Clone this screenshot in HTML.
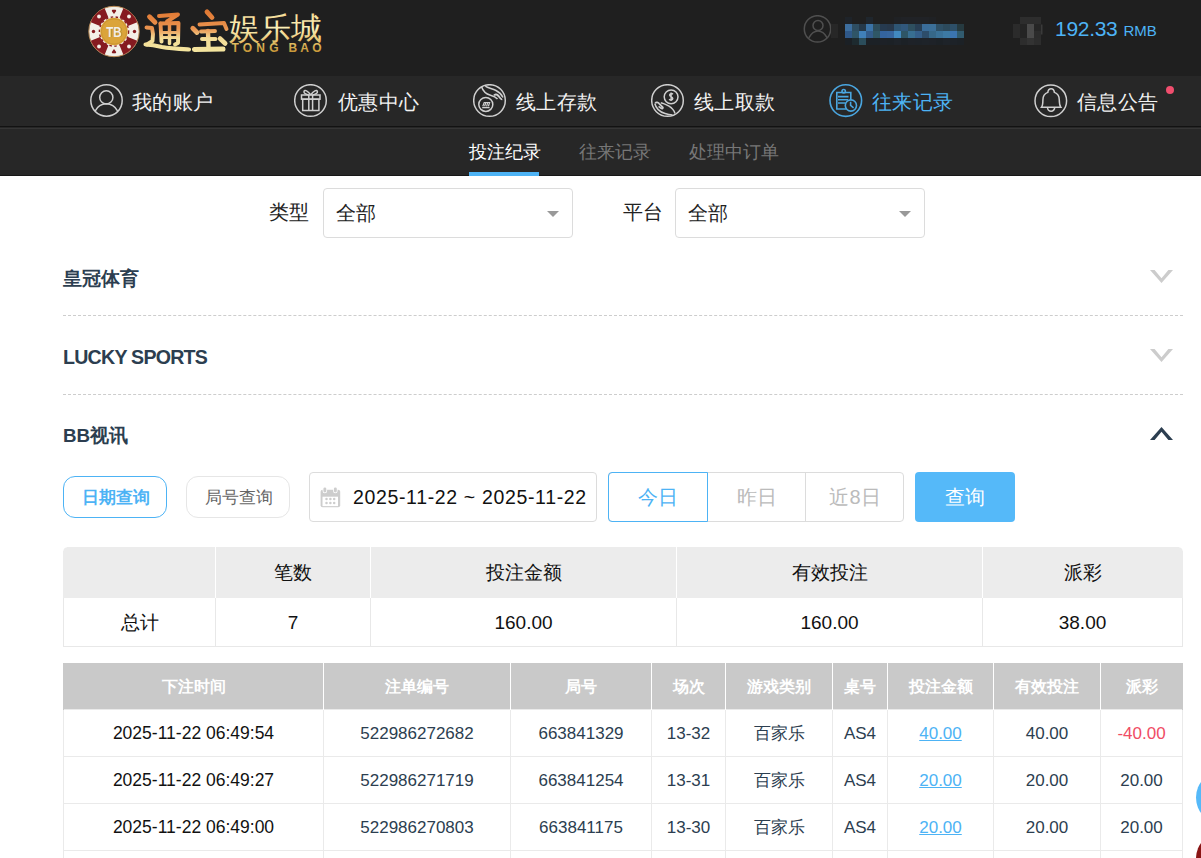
<!DOCTYPE html>
<html><head><meta charset="utf-8">
<style>
*{margin:0;padding:0;box-sizing:border-box;}
html,body{width:1201px;height:858px;overflow:hidden;background:#fff;font-family:"Liberation Sans",sans-serif;color:#2c3e50;position:relative;}
.abs{position:absolute;white-space:nowrap;}
#top{position:absolute;left:0;top:0;width:1201px;height:76px;background:#1f1f1f;}
#nav{position:absolute;left:0;top:76px;width:1201px;height:50px;background:#272727;}
#navline{position:absolute;left:0;top:126px;width:1201px;height:1px;background:#121212;}
#navline1{position:absolute;left:0;top:127px;width:1201px;height:1px;background:#262626;}
#navline2{position:absolute;left:0;top:128px;width:1201px;height:1px;background:#353535;}
#sub{position:absolute;left:0;top:129px;width:1201px;height:46px;background:#272727;}
#subline{position:absolute;left:0;top:175px;width:1201px;height:1px;background:#171717;}
.ni{position:absolute;top:84px;height:34px;}
.ni svg{position:absolute;left:0;top:0;}
.ni span{position:absolute;left:42px;top:3.5px;font-size:20px;line-height:28px;color:#f2f2f2;white-space:nowrap;letter-spacing:0.4px;}
.tab{position:absolute;top:139px;font-size:18px;line-height:26px;color:#777;white-space:nowrap;}
.lbl{position:absolute;font-size:19.5px;line-height:26px;color:#222;white-space:nowrap;}
.sel{position:absolute;top:188px;width:250px;height:50px;border:1px solid #dcdcdc;border-radius:4px;}
.sel span{position:absolute;left:12px;top:11px;font-size:19.5px;line-height:26px;color:#222;}
.sel i{position:absolute;right:13.5px;top:22px;width:0;height:0;border-left:6px solid transparent;border-right:6px solid transparent;border-top:6px solid #999;}
.acc{position:absolute;left:63px;font-size:18.8px;font-weight:bold;line-height:26px;color:#2c3e50;white-space:nowrap;}
.dash{position:absolute;left:63px;width:1120px;height:1px;border-top:1px dashed #cdcdcd;}
.chev{position:absolute;left:1150px;}
.btn{position:absolute;top:476px;height:42px;border-radius:12px;padding-left:1px;font-size:17px;line-height:41px;text-align:center;white-space:nowrap;}
.seg{position:absolute;box-sizing:border-box;top:472px;height:50px;font-size:20px;line-height:48px;text-align:center;color:#bbb;}
table{border-collapse:collapse;table-layout:fixed;}
#sum{position:absolute;left:63px;top:547px;width:1120px;}
#sum td{border:1px solid #e8e8e8;text-align:center;font-size:19px;color:#111;padding:0;}
#sum tr.h td{background:#ececec;border-top:none;border-bottom:none;border-left-color:#fff;border-right-color:#fff;height:51px;padding-top:1px;}
#sum tr.h td:first-child{border-left-color:#ececec;}
#sum tr.h td:last-child{border-right-color:#ececec;}
#sum tr.b td{height:48px;padding-top:2px;border-top:none;}
#det{position:absolute;left:63px;top:663px;width:1120px;}
#det th{height:46px;background:#c9c9c9;color:#fff;font-size:16px;font-weight:bold;border-left:1px solid #fff;border-right:1px solid #fff;padding:4px 0 0 0;}
#det th:first-child{border-left-color:#c9c9c9;}
#det th:last-child{border-right-color:#c9c9c9;}
#det td{height:47px;border:1px solid #eaeaea;text-align:center;font-size:17px;color:#2c3e50;padding:2px 0 0 0;}
#det td.t{color:#111;font-size:17.5px;}
#det td.l{color:#4db3f5;text-decoration:underline;}
#det td.r{color:#f04c64;}
</style></head><body>
<div id="top"></div>
<div id="nav"></div>
<div id="navline"></div>
<div id="navline1"></div>
<div id="navline2"></div>
<div id="sub"></div>
<div id="subline"></div>

<!-- LOGO -->
<svg class="abs" style="left:86px;top:3px;" width="240" height="58" viewBox="0 0 240 58">
<defs>
<linearGradient id="gold" x1="0" y1="0" x2="0" y2="1">
<stop offset="0" stop-color="#e0702a"/><stop offset="0.35" stop-color="#f3c77a"/><stop offset="0.6" stop-color="#fbf0b0"/><stop offset="1" stop-color="#d9a437"/>
</linearGradient>
<linearGradient id="gold2" x1="0" y1="0" x2="0" y2="1">
<stop offset="0" stop-color="#f3d890"/><stop offset="0.5" stop-color="#fbf0b8"/><stop offset="1" stop-color="#e0b050"/>
</linearGradient>
<linearGradient id="gold3" x1="0" y1="0" x2="0" y2="1">
<stop offset="0" stop-color="#e8c870"/><stop offset="1" stop-color="#c08a28"/>
</linearGradient>
</defs>
<g transform="translate(28,28.5)">
<circle r="25.2" fill="#f3efe8" stroke="#b98a55" stroke-width="1"/>
<g fill="#861a20">
<path id="seg" d="M-9.37,-23.18 A25,25 0 0 0 -23.18,-9.37 L-13.9,-5.62 A15,15 0 0 1 -5.62,-13.9 Z"/>
<use href="#seg" transform="rotate(90)"/><use href="#seg" transform="rotate(180)"/><use href="#seg" transform="rotate(270)"/>
<path d="M0,-17.5 L-2.2,-20.5 A1.3,1.3 0 0 1 0,-21.5 A1.3,1.3 0 0 1 2.2,-20.5 Z"/>
<path d="M0,17.5 L-2.2,20.5 A1.3,1.3 0 0 0 0,21.5 A1.3,1.3 0 0 0 2.2,20.5 Z"/>
<circle cx="-20.5" cy="0" r="1.7"/><circle cx="20.5" cy="0" r="1.7"/>
</g>
<g fill="#f3efe8"><circle cx="-15" cy="-15" r="1.9"/><circle cx="15" cy="-15" r="1.9"/><circle cx="-15" cy="15" r="1.9"/><circle cx="15" cy="15" r="1.9"/></g>
<circle r="14.6" fill="none" stroke="#861a20" stroke-width="1.4" stroke-dasharray="2.5 2.5"/>
<circle r="13.7" fill="#dba43a"/>
<circle r="12.6" fill="none" stroke="#c9922e" stroke-width="0.8"/>
<text x="0.8" y="5.8" text-anchor="middle" font-family="Liberation Sans" font-weight="bold" font-size="14" fill="#6a4a20" opacity="0.5" transform="scale(0.83,1)">TB</text>
<text x="0" y="5.2" text-anchor="middle" font-family="Liberation Sans" font-weight="bold" font-size="14" fill="#f3efe6" transform="scale(0.83,1)">TB</text>
</g>
<linearGradient id="goldc" gradientUnits="userSpaceOnUse" x1="0" y1="8" x2="0" y2="50">
<stop offset="0" stop-color="#e07832"/><stop offset="0.42" stop-color="#ea9450"/><stop offset="0.65" stop-color="#f3dc96"/><stop offset="1" stop-color="#f4e6a0"/>
</linearGradient>
<g fill="none" stroke="url(#goldc)" stroke-linecap="round" stroke-linejoin="round">
<path d="M63.5 13.8 L69 19.2" stroke-width="4.83"/>
<path d="M60.5 24.5 L66 25 L67 31 L66.5 38 L61 41.5" stroke-width="3.91"/>
<path d="M59.5 41.5 C64 41.8 69 42.5 76 44 C84 45.5 94 46 103 46.5" stroke-width="4.14"/>
<path d="M73 13 L92 11.5 L81 18.5" stroke-width="3.91"/>
<path d="M74.5 20.5 L75.5 38.5" stroke-width="3.91"/>
<path d="M74.5 20.5 L92.5 20 L92 40 L89 41.5" stroke-width="3.91"/>
<path d="M76 29.5 H91 M76 34.5 H91" stroke-width="2.99"/>
<path d="M83.5 20 V40.5" stroke-width="3.45"/>
<path d="M121 8.8 L126 14.5" stroke-width="4.83"/>
<path d="M106.8 25.2 L111 29.5" stroke-width="4.83"/>
<path d="M113.5 21.5 L138 20 L140.5 26" stroke-width="3.91"/>
<path d="M115 28.5 L129 28 M116 36 L129.5 36" stroke-width="3.91"/>
<path d="M122 28 L122.5 45" stroke-width="4.37"/>
<path d="M108.5 46.5 L137 46" stroke-width="5.06"/>
<path d="M134 35.5 L139.2 40.5" stroke-width="4.60"/>
</g>

<g transform="translate(142.5,36) scale(1,1)"><text x="0" y="0" font-family="Liberation Serif" font-weight="500" font-size="31" fill="url(#gold2)">娱乐城</text></g>
<text x="145.5" y="48.8" font-family="Liberation Sans" font-weight="bold" font-size="12" textLength="47" lengthAdjust="spacing" fill="url(#gold3)">TONG</text><text x="202.5" y="48.8" font-family="Liberation Sans" font-weight="bold" font-size="12" textLength="33" lengthAdjust="spacing" fill="url(#gold3)">BAO</text>
</svg>

<!-- top right -->
<svg class="abs" style="left:803px;top:15px;" width="29" height="29" viewBox="0 0 29 29" fill="none" stroke="#4f4f4f" stroke-width="1.5">
<circle cx="14.5" cy="13.9" r="13.2"/>
<circle cx="15" cy="10.5" r="5"/>
<path d="M5.8 22.8 C8.5 18 11.5 16 15 16 C18.5 16 21.5 18 24.2 22.8"/>
</svg>
<div class="abs" style="left:831px;top:24px;width:7px;height:14px;background:#272727;"></div>
<svg class="abs" style="left:845px;top:17px;" width="119" height="28" viewBox="0 0 119 28"><rect x="0" y="0" width="7" height="7" fill="#1e2329"/><rect x="7" y="0" width="7" height="7" fill="#1f1f1f"/><rect x="14" y="0" width="7" height="7" fill="#1f1f1f"/><rect x="21" y="0" width="7" height="7" fill="#1f262d"/><rect x="28" y="0" width="7" height="7" fill="#1f1f1f"/><rect x="35" y="0" width="7" height="7" fill="#1f1f1f"/><rect x="42" y="0" width="7" height="7" fill="#1f1f1f"/><rect x="49" y="0" width="7" height="7" fill="#1f2124"/><rect x="56" y="0" width="7" height="7" fill="#202226"/><rect x="63" y="0" width="7" height="7" fill="#202226"/><rect x="70" y="0" width="7" height="7" fill="#202226"/><rect x="77" y="0" width="7" height="7" fill="#202226"/><rect x="84" y="0" width="7" height="7" fill="#1f2124"/><rect x="91" y="0" width="7" height="7" fill="#1f1f1f"/><rect x="98" y="0" width="7" height="7" fill="#1f1f1f"/><rect x="105" y="0" width="7" height="7" fill="#1f1f1f"/><rect x="112" y="0" width="7" height="7" fill="#1f1f1f"/><rect x="0" y="7" width="7" height="7" fill="#3d6e9e"/><rect x="7" y="7" width="7" height="7" fill="#2e4d61"/><rect x="14" y="7" width="7" height="7" fill="#25394a"/><rect x="21" y="7" width="7" height="7" fill="#3b73a6"/><rect x="28" y="7" width="7" height="7" fill="#2d4d5c"/><rect x="35" y="7" width="7" height="7" fill="#263a4f"/><rect x="42" y="7" width="7" height="7" fill="#27384b"/><rect x="49" y="7" width="7" height="7" fill="#2e5573"/><rect x="56" y="7" width="7" height="7" fill="#31587c"/><rect x="63" y="7" width="7" height="7" fill="#2e4f5f"/><rect x="70" y="7" width="7" height="7" fill="#283f55"/><rect x="77" y="7" width="7" height="7" fill="#3a6d9a"/><rect x="84" y="7" width="7" height="7" fill="#3b6f98"/><rect x="91" y="7" width="7" height="7" fill="#2e5066"/><rect x="98" y="7" width="7" height="7" fill="#2c4a5c"/><rect x="105" y="7" width="7" height="7" fill="#2d4f68"/><rect x="112" y="7" width="7" height="7" fill="#263a40"/><rect x="0" y="14" width="7" height="7" fill="#2f5888"/><rect x="7" y="14" width="7" height="7" fill="#2f5567"/><rect x="14" y="14" width="7" height="7" fill="#4080b9"/><rect x="21" y="14" width="7" height="7" fill="#335c8b"/><rect x="28" y="14" width="7" height="7" fill="#2f5766"/><rect x="35" y="14" width="7" height="7" fill="#3464a0"/><rect x="42" y="14" width="7" height="7" fill="#3766a0"/><rect x="49" y="14" width="7" height="7" fill="#4289c0"/><rect x="56" y="14" width="7" height="7" fill="#2e5565"/><rect x="63" y="14" width="7" height="7" fill="#386e91"/><rect x="70" y="14" width="7" height="7" fill="#355f8a"/><rect x="77" y="14" width="7" height="7" fill="#2d4d6a"/><rect x="84" y="14" width="7" height="7" fill="#366889"/><rect x="91" y="14" width="7" height="7" fill="#3a7298"/><rect x="98" y="14" width="7" height="7" fill="#3d7aa3"/><rect x="105" y="14" width="7" height="7" fill="#3b74b0"/><rect x="112" y="14" width="7" height="7" fill="#315b6f"/><rect x="0" y="21" width="7" height="7" fill="#1b2025"/><rect x="7" y="21" width="7" height="7" fill="#1d2a2f"/><rect x="14" y="21" width="7" height="7" fill="#2b4d5b"/><rect x="21" y="21" width="7" height="7" fill="#1c2126"/><rect x="28" y="21" width="7" height="7" fill="#1c2126"/><rect x="35" y="21" width="7" height="7" fill="#1d2127"/><rect x="42" y="21" width="7" height="7" fill="#1c2126"/><rect x="49" y="21" width="7" height="7" fill="#1e2329"/><rect x="56" y="21" width="7" height="7" fill="#1c2126"/><rect x="63" y="21" width="7" height="7" fill="#1e2228"/><rect x="70" y="21" width="7" height="7" fill="#1d2228"/><rect x="77" y="21" width="7" height="7" fill="#1e2329"/><rect x="84" y="21" width="7" height="7" fill="#1e2228"/><rect x="91" y="21" width="7" height="7" fill="#1c2126"/><rect x="98" y="21" width="7" height="7" fill="#1e2329"/><rect x="105" y="21" width="7" height="7" fill="#1d2228"/><rect x="112" y="21" width="7" height="7" fill="#1c2126"/></svg>
<svg class="abs" style="left:1013px;top:17px;" width="31" height="28" viewBox="0 0 31 28">
<rect x="7" y="0" width="21" height="7" fill="#2d2d2d"/>
<rect x="0" y="7" width="7" height="14" fill="#2b2b2b"/>
<rect x="7" y="7" width="7" height="14" fill="#242424"/>
<rect x="14" y="7" width="7" height="14" fill="#4a4a4a"/>
<rect x="21" y="7" width="7" height="7" fill="#262626"/>
<rect x="21" y="14" width="7" height="7" fill="#2c2c2c"/>
<rect x="28" y="7.5" width="1.5" height="10" fill="#3a3a3a"/>
<rect x="7" y="21" width="7" height="7" fill="#2d2d2d"/>
<rect x="14" y="21" width="7" height="7" fill="#333"/>
<rect x="21" y="21" width="7" height="7" fill="#2d2d2d"/>
</svg>
<div class="abs" style="left:1055px;top:15px;font-size:21px;line-height:28px;color:#4db3f5;letter-spacing:-0.3px;">192.33</div>
<div class="abs" style="left:1123.5px;top:21px;font-size:15px;line-height:20px;color:#4db3f5;">RMB</div>

<!-- nav items -->
<div class="ni" style="left:90px;"><svg width="34" height="34" viewBox="0 0 34 34" fill="none" stroke="#cfcfcf" stroke-width="1.5">
<circle cx="16.5" cy="16.5" r="15.7"/>
<circle cx="16.3" cy="13.4" r="6.6"/>
<path d="M5.2 27 C8 21.5 12 19.8 16.3 19.8 C20.6 19.8 24.6 21.5 27.6 27"/>
</svg><span>我的账户</span></div>
<div class="ni" style="left:294px;"><svg width="34" height="34" viewBox="0 0 34 34" fill="none" stroke="#cfcfcf" stroke-width="1.5">
<circle cx="16.5" cy="16.5" r="15.8"/>
<rect x="7.5" y="11" width="18.5" height="4.2"/>
<rect x="8.7" y="15.2" width="16.2" height="11.3"/>
<path d="M14.8 11 V26.5 M18.6 11 V26.5"/>
<path d="M16.7 11 C14 6.5 10.5 5.5 10 7.5 C9.6 9.2 12 10.6 14.8 11 M16.7 11 C19.4 6.5 22.9 5.5 23.4 7.5 C23.8 9.2 21.4 10.6 18.6 11"/>
</svg><span style="left:44px;">优惠中心</span></div>
<div class="ni" style="left:473px;"><svg width="34" height="34" viewBox="0 0 34 34" fill="none" stroke="#cfcfcf" stroke-width="1.5">
<circle cx="16.5" cy="16.5" r="15.8"/>
<path d="M8.6 2.8 C10 7.5 13 10 17.5 11.3 C20 12 22.5 12.8 24.5 15"/>
<path d="M12.3 2.2 C15 4 19 4.6 23 6.5 C26 8 28.6 10.5 30 13.5"/>
<path d="M21 11.5 C22 9.8 24 10.2 25.5 12 C27 14 28.5 15.5 29.2 15.2" stroke-width="2"/>
<circle cx="12.8" cy="20.4" r="7"/>
<path d="M9.8 22.3 L11.2 18.5 H16.6 L15.4 22.3 M11.6 22.3 L12.8 18.8 M13.6 22.3 L14.6 18.8" stroke-width="1.2"/>
<path d="M9.2 23.6 H16.6" stroke-width="1.4"/>
</svg><span style="left:43px;">线上存款</span></div>
<div class="ni" style="left:651px;"><svg width="34" height="34" viewBox="0 0 34 34" fill="none" stroke="#cfcfcf" stroke-width="1.5">
<circle cx="16.5" cy="16.5" r="15.8"/>
<circle cx="20.1" cy="12.8" r="6.9"/>
<path d="M22 10.2 C21 9.2 18.6 9.3 18.6 11 C18.6 12.8 21.8 12.5 21.8 14.5 C21.8 16.3 19.2 16.4 18.1 15.3 M20.1 8.6 V17" stroke-width="1.4"/>
<path d="M9.8 18.8 C12.5 19.3 15 20.6 18 22.2 C21 24 23 26.2 24 29.5"/>
<path d="M3.8 19.5 C5 24.5 9 28 14 29.5 C17 30.4 19.5 30.8 21.5 31"/>
<path d="M4.2 19.2 C5.2 17.8 7 18.3 8.2 19.6 L11.8 23.3 C12.4 24.3 11.2 25 10.2 24.3 L7.6 22.3" stroke-width="1.7"/>
</svg><span style="left:43px;">线上取款</span></div>
<div class="ni" style="left:829px;"><svg width="34" height="34" viewBox="0 0 34 34" fill="none" stroke="#4aa6e0" stroke-width="1.6">
<circle cx="16.8" cy="16.6" r="15.8"/>
<path d="M17 25 H7.8 V8.5 H21.8 V15.8"/>
<circle cx="14.7" cy="7.2" r="1.7"/>
<path d="M9 12.6 H19.5 M9 15.8 H19 M9 19 H16.5"/>
<circle cx="21.9" cy="21.5" r="5.6"/>
<path d="M21.6 17.8 V21.3 L24.6 23.8"/>
</svg><span style="color:#4db3f5;left:43px;">往来记录</span></div>
<div class="ni" style="left:1034px;"><svg width="34" height="34" viewBox="0 0 34 34" fill="none" stroke="#cfcfcf" stroke-width="1.5">
<circle cx="16.8" cy="16.8" r="15.8"/>
<path d="M7.5 23.2 H26.8 C25.6 21.5 25.3 19 25.3 16 C25.3 11.5 23.2 9.3 20.4 8.4 C20.1 5.9 18.8 4.7 17.1 4.7 C15.4 4.7 14.1 5.9 13.8 8.4 C11 9.3 8.9 11.5 8.9 16 C8.9 19 8.7 21.5 7.5 23.2 Z"/>
<path d="M13.5 23.6 A3.6 3.6 0 0 0 20.7 23.6"/>
</svg><span style="left:43px;">信息公告</span></div>
<div class="abs" style="left:1165.5px;top:86px;width:8px;height:8px;border-radius:50%;background:#f04e6e;"></div>


<div class="tab" style="left:469px;color:#fff;">投注纪录</div>
<div class="tab" style="left:579px;">往来记录</div>
<div class="tab" style="left:689px;">处理中订单</div>
<div class="abs" style="left:469px;top:172px;width:70px;height:4px;background:#4db3f5;"></div>

<!-- filters -->
<div class="lbl" style="left:269px;top:199px;">类型</div>
<div class="sel" style="left:323px;"><span>全部</span><i></i></div>
<div class="lbl" style="left:623px;top:199px;">平台</div>
<div class="sel" style="left:675px;"><span>全部</span><i></i></div>

<!-- accordions -->
<div class="acc" style="top:266px;">皇冠体育</div>
<div class="dash" style="top:315px;"></div>
<div class="acc" style="top:343.5px;font-size:19.6px;letter-spacing:-0.75px;">LUCKY SPORTS</div>
<div class="dash" style="top:394px;"></div>
<div class="acc" style="top:423px;">BB视讯</div>
<svg class="chev" style="top:270px;" width="23" height="13" viewBox="0 0 23 13"><polygon points="0,0 4.6,0 11.5,8.3 18.4,0 23,0 11.5,13" fill="#cccccc"/></svg>
<svg class="chev" style="top:349px;" width="23" height="13" viewBox="0 0 23 13"><polygon points="0,0 4.6,0 11.5,8.3 18.4,0 23,0 11.5,13" fill="#cccccc"/></svg>
<svg class="chev" style="top:427px;" width="23" height="13" viewBox="0 0 23 13"><polygon points="0,13 4.6,13 11.5,4.7 18.4,13 23,13 11.5,0" fill="#2c3e50"/></svg>

<!-- query row -->
<div class="btn" style="left:63px;width:104px;border:1px solid #4db3f5;color:#4db3f5;font-weight:bold;">日期查询</div>
<div class="btn" style="left:186px;width:104px;border:1px solid #e6e6e6;color:#666;">局号查询</div>
<div class="abs" style="left:309px;top:472px;width:288px;height:50px;border:1px solid #dcdcdc;border-radius:4px;">
<svg class="abs" style="left:10px;top:14px;" width="22" height="22" viewBox="0 0 22 22">
<rect x="0.6" y="2.7" width="19.6" height="17.5" rx="2" fill="#cdcdcd"/>
<rect x="2.5" y="9.7" width="15.5" height="9.4" fill="#fff"/>
<rect x="2.6" y="-0.2" width="4.5" height="6.4" rx="2.2" fill="#fff"/>
<rect x="13.1" y="-0.2" width="4.5" height="6.4" rx="2.2" fill="#fff"/>
<rect x="3.4" y="0.4" width="2.9" height="5" rx="1.45" fill="#cdcdcd"/>
<rect x="13.9" y="0.4" width="2.9" height="5" rx="1.45" fill="#cdcdcd"/>
<g fill="#cdcdcd"><circle cx="6.5" cy="12.1" r="1.25"/><circle cx="10.4" cy="12.1" r="1.25"/><circle cx="14.2" cy="12.1" r="1.25"/><circle cx="6.5" cy="16" r="1.25"/><circle cx="10.4" cy="16" r="1.25"/><circle cx="14.2" cy="16" r="1.25"/></g>
</svg>
<div class="abs" style="left:43px;top:11px;font-size:19.5px;line-height:26px;color:#111;letter-spacing:0.65px;">2025-11-22 ~ 2025-11-22</div>
</div>
<div class="abs" style="left:608px;top:472px;width:296px;height:50px;border:1px solid #dcdcdc;border-radius:4px;"></div>
<div class="seg" style="left:707px;width:99px;border-left:1px solid #dcdcdc;padding-top:1px;">昨日</div>
<div class="seg" style="left:805px;width:99px;border-left:1px solid #dcdcdc;padding-top:1px;">近8日</div>
<div class="seg" style="left:608px;width:100px;border:1px solid #4db3f5;border-radius:4px 0 0 4px;color:#4db3f5;">今日</div>
<div class="abs" style="left:915px;top:472px;width:100px;height:50px;background:#55b9f9;border-radius:4px;color:#fff;font-size:20px;line-height:50px;text-align:center;">查询</div>

<table id="sum">
<colgroup><col style="width:152px"><col style="width:155px"><col style="width:306px"><col style="width:306px"><col style="width:200px"></colgroup>
<tr class="h"><td></td><td>笔数</td><td>投注金额</td><td>有效投注</td><td>派彩</td></tr>
<tr class="b"><td>总计</td><td>7</td><td>160.00</td><td>160.00</td><td>38.00</td></tr>
</table>
<table id="det">
<colgroup><col style="width:260px"><col style="width:187px"><col style="width:141px"><col style="width:74px"><col style="width:107px"><col style="width:55px"><col style="width:106px"><col style="width:107px"><col style="width:82px"></colgroup>
<tr><th>下注时间</th><th>注单编号</th><th>局号</th><th>场次</th><th>游戏类别</th><th>桌号</th><th>投注金额</th><th>有效投注</th><th>派彩</th></tr>
<tr><td class="t">2025-11-22 06:49:54</td><td>522986272682</td><td>663841329</td><td>13-32</td><td>百家乐</td><td>AS4</td><td class="l">40.00</td><td>40.00</td><td class="r">-40.00</td></tr>
<tr><td class="t">2025-11-22 06:49:27</td><td>522986271719</td><td>663841254</td><td>13-31</td><td>百家乐</td><td>AS4</td><td class="l">20.00</td><td>20.00</td><td>20.00</td></tr>
<tr><td class="t">2025-11-22 06:49:00</td><td>522986270803</td><td>663841175</td><td>13-30</td><td>百家乐</td><td>AS4</td><td class="l">20.00</td><td>20.00</td><td>20.00</td></tr>
<tr><td class="t">2025-11-22 06:48:33</td><td>522986269877</td><td>663841098</td><td>13-29</td><td>百家乐</td><td>AS4</td><td class="l">20.00</td><td>20.00</td><td>20.00</td></tr>
</table>

<div class="abs" style="left:63px;top:547px;width:4px;height:4px;background:radial-gradient(circle at 100% 100%, rgba(255,255,255,0) 3.2px, #fff 4px);"></div>
<div class="abs" style="left:1179px;top:547px;width:4px;height:4px;background:radial-gradient(circle at 0% 100%, rgba(255,255,255,0) 3.2px, #fff 4px);"></div>
<div class="abs" style="left:1196px;top:771px;width:53px;height:53px;border-radius:50%;background:#55b9f9;"></div>
<div class="abs" style="left:1196px;top:832px;width:53px;height:53px;border-radius:50%;background:#8a1515;"></div>
</body></html>
